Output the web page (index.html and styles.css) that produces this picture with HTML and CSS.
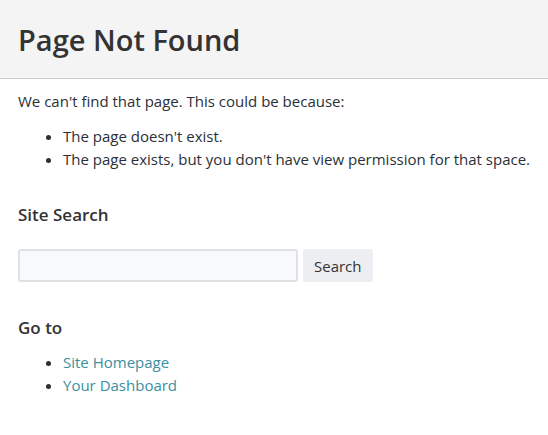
FILE: index.html
```html
<!DOCTYPE html>
<html lang="en">
<head>
  <meta charset="UTF-8">
  <title>Page Not Found</title>
  <link rel="stylesheet" href="styles.css">
</head>
<body>

<div class="cabecera">
  <h1>Page Not Found</h1>
</div>

<div class="contenido">
  <p>We can't find that page. This could be because:</p>
  <ul>
    <li>The page doesn't exist.</li>
    <li>The page exists, but you don't have view permission for that space.</li>
  </ul>

  <h3 class="titulo-buscar">Site Search</h3>
  <form class="buscador">
    <input type="text" name="q">
    <button type="submit">Search</button>
  </form>

  <h3 class="titulo-ir">Go to</h3>
  <ul>
    <li><a href="#">Site Homepage</a></li>
    <li><a href="#">Your Dashboard</a></li>
  </ul>
</div>

</body>
</html>
```

FILE: styles.css
```css
body {
  font-family: "Open Sans", "Noto Sans", sans-serif;
  font-size: 15px;
  color: #2b3037;
  background-color: #ffffff;
  margin: 0;
  padding: 0;
}

.cabecera {
  background-color: #f4f4f4;
  border-bottom: 1px solid #cfcfcf;
  height: 78px;
  padding: 0 18px;
  display: flex;
  align-items: center;
}

.cabecera h1 {
  margin: 0;
  font-size: 29px;
  font-weight: 600;
  color: #333333;
}

.contenido {
  padding: 11px 8px 11px 18px;
}

.contenido p {
  margin: 0 0 12px;
  line-height: 23px;
}

ul {
  margin: 0;
  padding-left: 45px;
}

li {
  line-height: 23px;
  white-space: nowrap;
}

h3 {
  font-size: 17px;
  font-weight: 600;
  line-height: 23px;
  color: #333333;
}

.titulo-buscar {
  margin: 32px 0 23px;
}

.titulo-ir {
  margin: 34px 0 12px;
}

.buscador {
  display: flex;
  gap: 5px;
  align-items: center;
}

.buscador input {
  width: 276px;
  height: 29px;
  border: 2px solid #dfe1e4;
  border-radius: 3px;
  background-color: #f8f9fa;
  padding: 0;
}

.buscador button {
  height: 33px;
  padding: 0 11px;
  border: none;
  border-radius: 3px;
  background-color: #eceef1;
  color: #333333;
  font-family: inherit;
  font-size: 15px;
}

a {
  color: #3a8fa0;
  text-decoration: none;
}
```
